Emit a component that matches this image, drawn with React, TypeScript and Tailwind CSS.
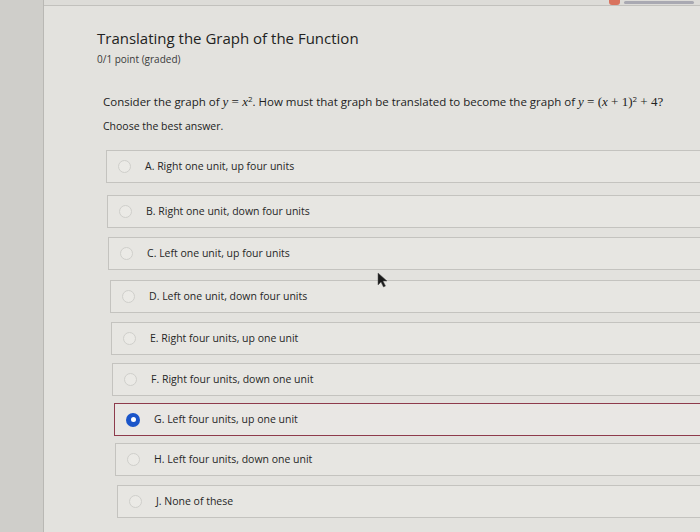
import React from "react";

const opcoes = [
  { id: "A", texto: "Right one unit, up four units", cls: "ml-[62px] mt-[0px]" },
  { id: "B", texto: "Right one unit, down four units", cls: "ml-[63px] mt-[12px]" },
  { id: "C", texto: "Left one unit, up four units", cls: "ml-[64px] mt-[9px]" },
  { id: "D", texto: "Left one unit, down four units", cls: "ml-[66px] mt-[10px]" },
  { id: "E", texto: "Right four units, up one unit", cls: "ml-[67px] mt-[9px]" },
  { id: "F", texto: "Right four units, down one unit", cls: "ml-[68px] mt-[8px]" },
  { id: "G", texto: "Left four units, up one unit", cls: "ml-[70px] mt-[7px]" },
  { id: "H", texto: "Left four units, down one unit", cls: "ml-[71px] mt-[7px]" },
  { id: "J", texto: "None of these", cls: "ml-[73px] mt-[9px]" },
];

function Radio({ marcado }: { marcado: boolean }) {
  if (marcado) {
    return (
      <span className="flex h-[14px] w-[14px] shrink-0 items-center justify-center rounded-full bg-[#1b55c9]">
        <span className="h-[5px] w-[5px] rounded-full bg-white" />
      </span>
    );
  }
  return <span className="h-[13px] w-[13px] shrink-0 rounded-full border-[1.5px] border-[#cfcfcb] bg-[#ebeae6]" />;
}

const serif = { fontFamily: '"Liberation Serif", serif', fontSize: "13px" };

export default function App() {
  return (
    <div
      className="relative flex h-[532px] w-[700px] overflow-hidden bg-[#e3e2de] text-[#2d2d2d]"
      style={{ fontFamily: '"Open Sans", "Noto Sans", sans-serif' }}
    >
      {/* barra lateral */}
      <div className="w-[44px] shrink-0 border-r border-[#b9b8b4] bg-[#cfceca]" />

      <div className="flex flex-1 flex-col">
        {/* faixa do topo */}
        <div className="flex h-[6px] items-start justify-end border-b border-[#c2c1bd] bg-[#dddcd8] pr-[6px]">
          <div className="flex items-center gap-1">
            <span className="h-[5px] w-[11px] rounded-b-[3px] bg-[#d9735e]" />
            <span className="h-[3px] w-[70px] rounded-sm bg-[#a9a9b2]" />
          </div>
        </div>

        <div className="pl-[53px]">
          <h1 className="mt-[22px] text-[15px] leading-[20px] text-[#222]">
            Translating the Graph of the Function
          </h1>
          <p className="mt-[5px] text-[10px] leading-[12px] text-[#3a3a3a]">0/1 point (graded)</p>
        </div>

        <div className="pl-[59px]">
          <p className="mt-[29px] text-[11.5px] leading-[16px] text-[#222]">
            Consider the graph of{" "}
            <span style={serif}>
              <i>y</i> = <i>x</i>
            </span>
            <sup className="text-[8px]">2</sup>. How must that graph be translated to become the graph of{" "}
            <span style={serif}>
              <i>y</i> = (<i>x</i> + 1)
            </span>
            <sup className="text-[8px]">2</sup>
            <span style={serif}> + 4?</span>
          </p>
          <p className="mt-[9px] text-[10.5px] leading-[14px] text-[#222]">Choose the best answer.</p>
        </div>

        <ul className="mt-[17px] flex flex-col">
          {opcoes.map((o) => {
            const marcado = o.id === "G";
            return (
              <li
                key={o.id}
                className={`${o.cls} -mr-[40px] flex h-[33px] items-center gap-[14px] pl-[11px] ${
                  marcado
                    ? "border-[1.5px] border-[#8e3b4c] bg-[#e9e7e4]"
                    : "border-[1.5px] border-[#c4c3bf] bg-[#e7e6e2]"
                }`}
              >
                <Radio marcado={marcado} />
                <span className="text-[10.5px] text-[#262626]">
                  {o.id}. {o.texto}
                </span>
              </li>
            );
          })}
        </ul>
      </div>

      {/* cursor */}
      <svg className="absolute left-[377px] top-[272px]" width="12" height="16" viewBox="0 0 12 16">
        <path d="M1 1 L1 13 L4 10 L6.5 15 L8.5 14 L6 9 L10 9 Z" fill="#1b1b1b" stroke="#555" strokeWidth="0.5" />
      </svg>
    </div>
  );
}
